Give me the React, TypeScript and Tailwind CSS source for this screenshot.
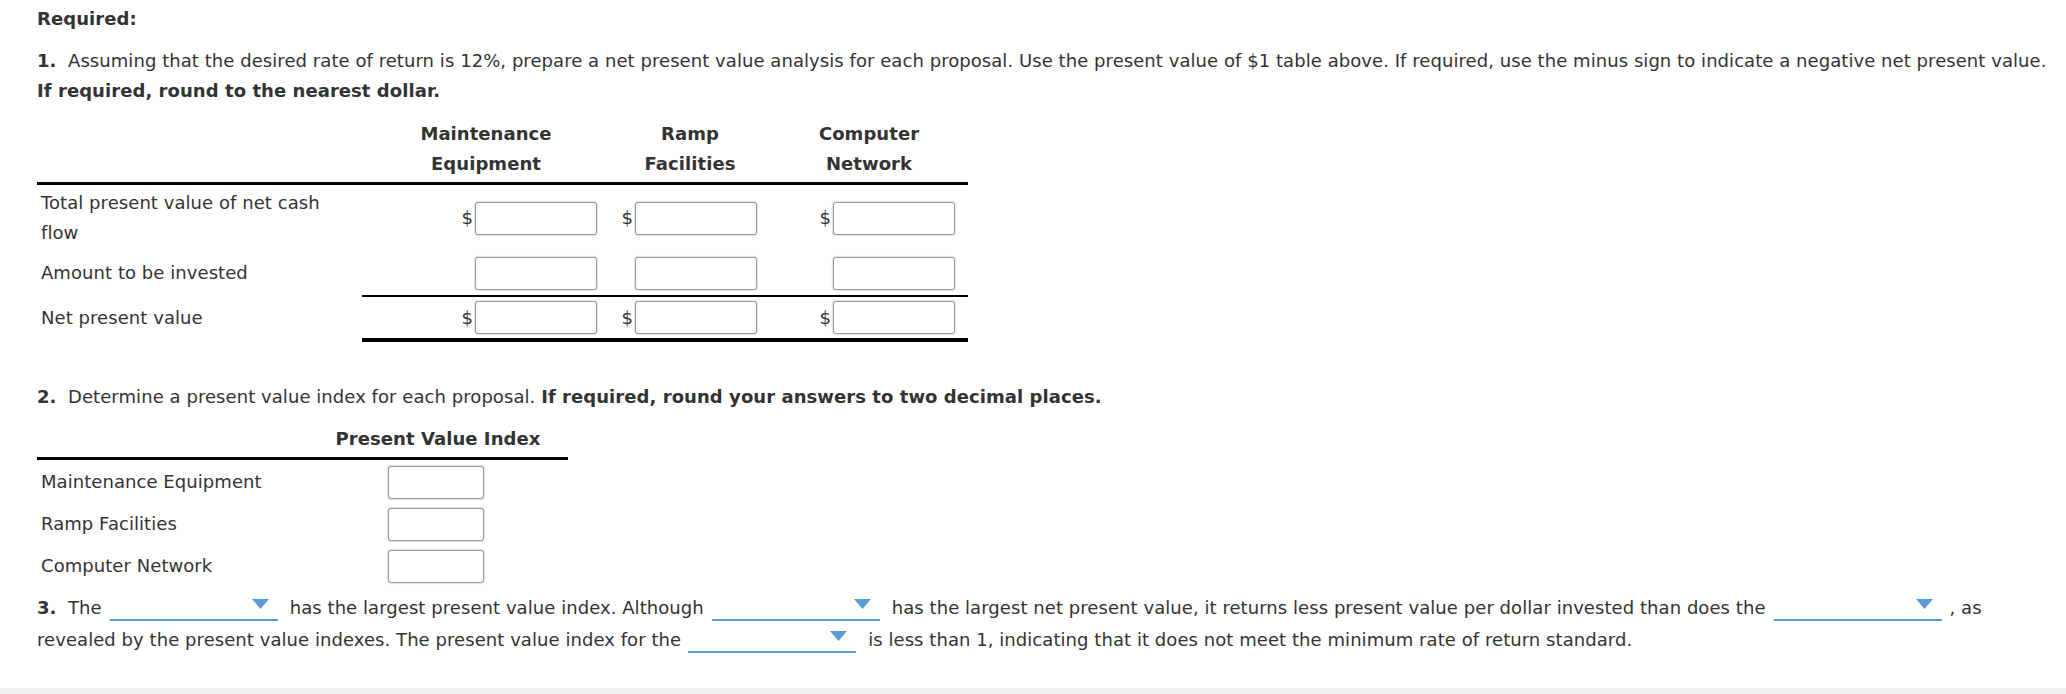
import React from 'react';

const inputCls =
  'h-[33px] rounded-[3px] border border-[#999] bg-white shadow-[0_0_2px_rgba(0,0,0,0.4)]';

function MoneyCell({ dollar, border }: { dollar: boolean; border?: 'thin' | 'thick' }) {
  return (
    <div
      className={
        'flex items-center justify-end pr-[13px] ' +
        (border === 'thin' ? 'border-b-2 border-black' : border === 'thick' ? 'border-b-4 border-black' : '')
      }
    >
      {dollar && <span className="mr-[2px]">$</span>}
      <div className={inputCls + ' w-[122px]'} />
    </div>
  );
}

function Dropdown({ className = '' }: { className?: string }) {
  return (
    <span className={'inline-flex h-[26px] w-[168px] shrink-0 items-center justify-end border-b-2 border-[#5b9bd5] pr-[9px] ' + className}>
      <svg width="17" height="10" viewBox="0 0 17 10" className="mb-[6px]">
        <polygon points="0,0 17,0 8.5,10" fill="#5b9bd5" />
      </svg>
    </span>
  );
}

export default function App() {
  const rows1: { label: React.ReactNode; dollar: boolean; h: string; border?: 'thin' | 'thick' }[] = [
    { label: <>Total present value of net cash<br />flow</>, dollar: true, h: 'h-[66px]' },
    { label: 'Amount to be invested', dollar: false, h: 'h-[46px]', border: 'thin' },
    { label: 'Net present value', dollar: true, h: 'h-[45px]', border: 'thick' },
  ];

  return (
    <div className="relative h-[694px] w-[2066px] bg-white font-['DejaVu_Sans',Verdana,sans-serif] text-[18px] leading-[30px] tracking-[0.06px] text-[#333]">
      <div className="pl-[37px] pt-[4px]">
        <p className="font-bold">Required:</p>
        <p className="mt-[12px] whitespace-nowrap">
          <b>1.</b>{'\u00a0 '}Assuming that the desired rate of return is 12%, prepare a net present value analysis for each
          proposal. Use the present value of $1 table above. If required, use the minus sign to indicate a negative net
          present value.
        </p>
        <p className="font-bold">If required, round to the nearest dollar.</p>

        {/* NPV table */}
        <div className="mt-[13px] grid w-[931px] grid-cols-[325px_248px_160px_198px]">
          <div className="border-b-[3px] border-black" />
          {[
            ['Maintenance', 'Equipment'],
            ['Ramp', 'Facilities'],
            ['Computer', 'Network'],
          ].map(([a, b]) => (
            <div key={a} className="border-b-[3px] border-black pb-[3px] text-center font-bold">
              {a}
              <br />
              {b}
            </div>
          ))}
          {rows1.map((r, i) => (
            <React.Fragment key={i}>
              <div className={'flex items-center pl-[4px] ' + r.h + (r.border ? ' pb-[3px]' : '')}>
                <div>{r.label}</div>
              </div>
              <MoneyCell dollar={r.dollar} border={r.border} />
              <MoneyCell dollar={r.dollar} border={r.border} />
              <MoneyCell dollar={r.dollar} border={r.border} />
            </React.Fragment>
          ))}
        </div>

        <p className="mt-[40px]">
          <b>2.</b>{'\u00a0 '}Determine a present value index for each proposal.{' '}
          <b>If required, round your answers to two decimal places.</b>
        </p>

        {/* PV index table */}
        <div className="mt-[12px] grid w-[531px] grid-cols-[263px_268px]">
          <div className="border-b-[3px] border-black" />
          <div className="border-b-[3px] border-black pb-[3px] pl-[8px] text-center font-bold">Present Value Index</div>
          <div className="col-span-2 h-[1px]" />
          {['Maintenance Equipment', 'Ramp Facilities', 'Computer Network'].map((l) => (
            <React.Fragment key={l}>
              <div className="flex h-[42px] items-center pl-[4px]">{l}</div>
              <div className="flex h-[42px] items-center justify-center pl-[4px]">
                <div className={inputCls + ' h-[32px] w-[96px]'} />
              </div>
            </React.Fragment>
          ))}
        </div>

        <div className="mt-[5px] flex h-[32px] items-center whitespace-nowrap">
          <b>3.</b>
          <span>{'\u00a0 '}The</span>
          <Dropdown className="ml-[8px] mr-[12px]" />
          <span>has the largest present value index. Although</span>
          <Dropdown className="ml-[8px] mr-[12px]" />
          <span>has the largest net present value, it returns less present value per dollar invested than does the</span>
          <Dropdown className="ml-[8px] mr-[8px]" />
          <span>, as</span>
        </div>
        <div className="flex h-[32px] items-center whitespace-nowrap">
          <span>revealed by the present value indexes. The present value index for the</span>
          <Dropdown className="ml-[7px] mr-[12px]" />
          <span>is less than 1, indicating that it does not meet the minimum rate of return standard.</span>
        </div>
      </div>
      <div className="mt-[32px] h-[6px] bg-[#f0f0f0]" />
    </div>
  );
}
